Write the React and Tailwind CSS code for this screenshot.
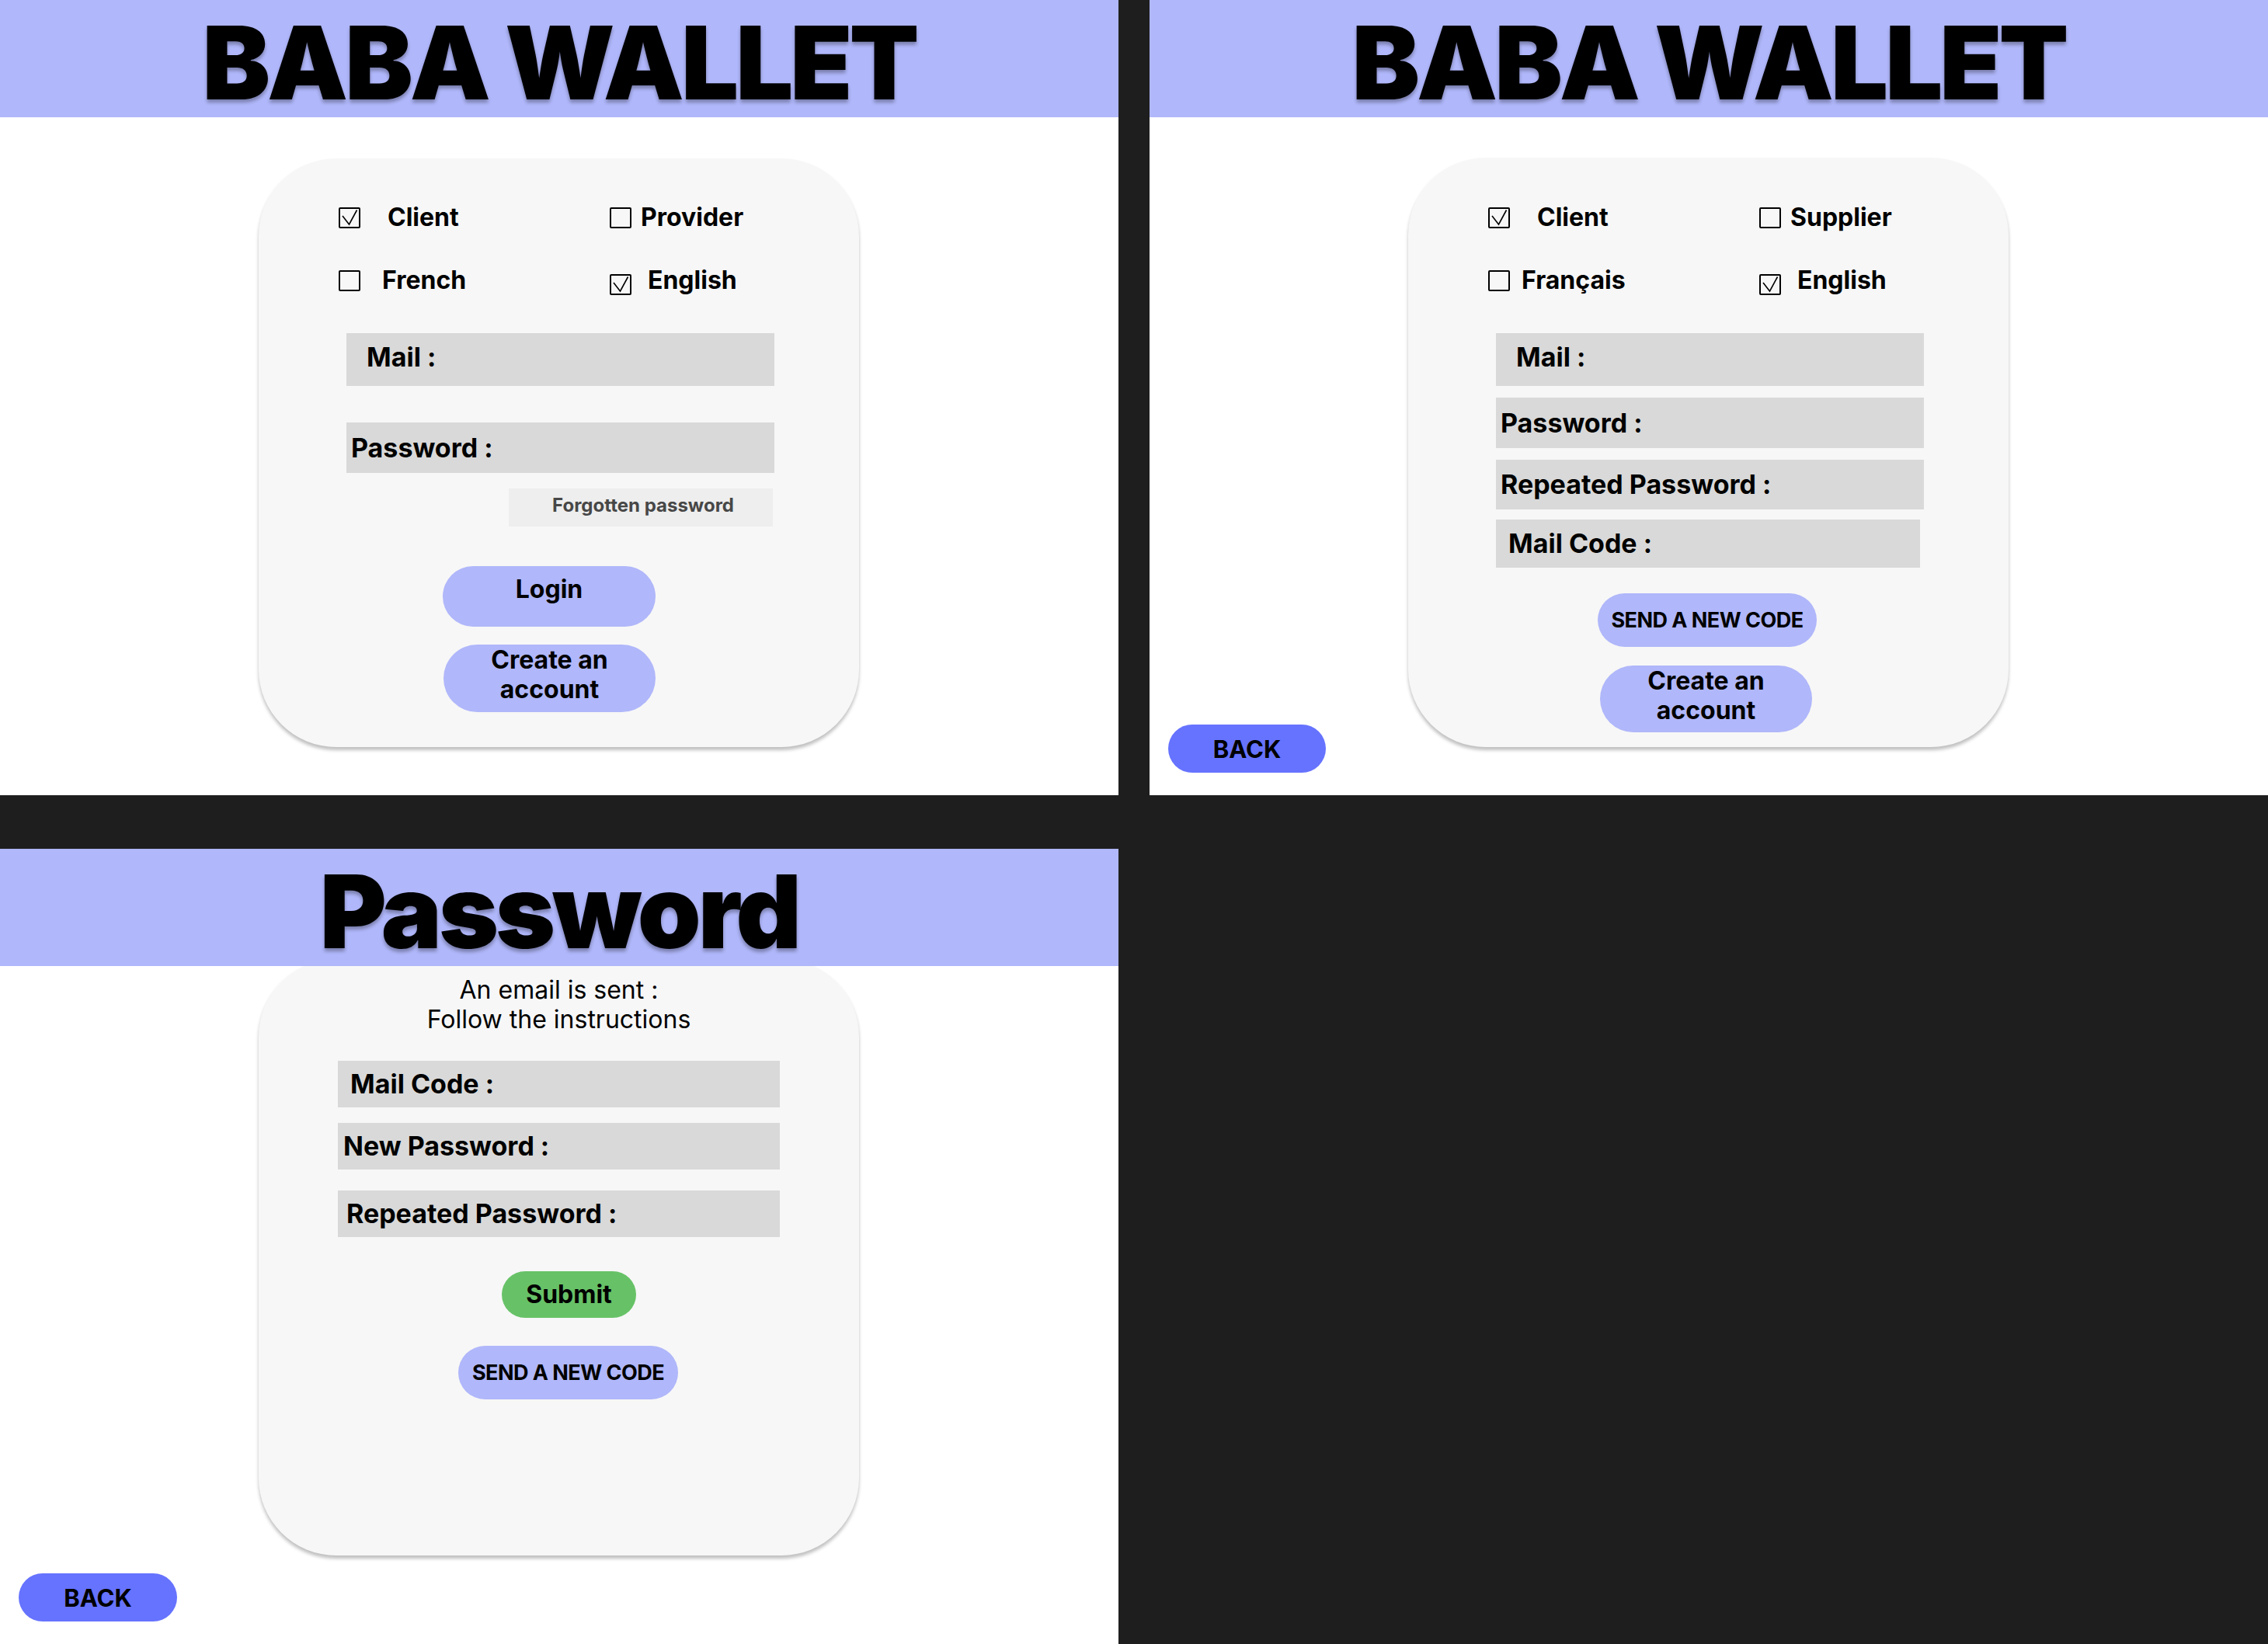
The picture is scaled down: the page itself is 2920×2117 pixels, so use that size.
function Box({ checked, className = "" }) {
  return (
    <svg width="28" height="27" viewBox="0 0 28 27" className={className}>
      <rect x="1" y="1" width="26" height="25" rx="1" fill="none" stroke="#000" strokeWidth="2" />
      {checked && (
        <polyline points="5,11 13.5,22 23.5,3.5" fill="none" stroke="#000" strokeWidth="1.6" />
      )}
    </svg>
  );
}

function Header({ children }) {
  return (
    <div className="relative z-10 h-[151px] shrink-0 bg-[#b0b7fa] flex items-center justify-center pt-[9px]">
      <h1 className="text-[131px] leading-none font-black text-black tracking-[-0.03em] [text-shadow:0_4px_4px_rgba(0,0,0,0.3)]">
        {children}
      </h1>
    </div>
  );
}

function Field({ label, className }) {
  return (
    <div className={"bg-[#d9d9d9] flex items-center text-[34px] font-bold text-black leading-none " + className}>
      {label}
    </div>
  );
}

const card = "w-[773px] bg-[#f7f7f7] rounded-[100px] shadow-[0_4px_4px_rgba(0,0,0,0.25)] flex flex-col";
const pill = "rounded-full bg-[#b0b7fa] flex flex-col items-center justify-center text-center font-bold text-black";

function Choices({ second, third }) {
  return (
    <div className="grid grid-cols-[349px_auto] gap-y-[41px] pl-[103px] text-[32px] font-bold leading-none">
      <div className="h-[40px] flex items-center gap-[35px]">
        <Box checked />
        <span>Client</span>
      </div>
      <div className="h-[40px] flex items-center gap-[12px]">
        <Box />
        <span>{second}</span>
      </div>
      <div className={"h-[40px] flex items-center " + (third === "French" ? "gap-[28px]" : "gap-[15px]")}>
        <Box />
        <span>{third}</span>
      </div>
      <div className="h-[40px] flex items-center gap-[21px]">
        <Box checked className="mt-[11px]" />
        <span>English</span>
      </div>
    </div>
  );
}

function CreateAccount({ className }) {
  return (
    <button className={pill + " text-[32px] leading-[38px] " + className}>
      <span>Create an</span>
      <span>account</span>
    </button>
  );
}

function LoginPanel() {
  return (
    <div className="bg-white flex flex-col">
      <Header>BABA WALLET</Header>
      <div className={card + " h-[758px] mt-[53px] ml-[333px] pt-[56px]"}>
        <Choices second="Provider" third="French" />
        <Field label="Mail :" className="mt-[48px] ml-[113px] w-[551px] h-[68px] pl-[26px] pb-[6px]" />
        <Field label="Password :" className="mt-[47px] ml-[113px] w-[551px] h-[65px] pl-[6px]" />
        <div className="mt-[20px] ml-[322px] w-[340px] h-[49px] bg-[#eeeeee] flex items-center justify-center pl-[6px] pb-[5px] text-[24px] font-bold text-[#474747] leading-none">
          Forgotten password
        </div>
        <button className={pill + " mt-[51px] ml-[237px] w-[274px] h-[78px] pb-[18px] text-[32px] leading-none"}>Login</button>
        <CreateAccount className="mt-[23px] ml-[238px] w-[273px] h-[87px] pb-[10px]" />
      </div>
    </div>
  );
}

function SignupPanel() {
  return (
    <div className="bg-white flex flex-col">
      <Header>BABA WALLET</Header>
      <div className="flex">
        <div className="w-[333px] shrink-0 pl-[24px] pt-[782px]">
          <button className="w-[203px] h-[62px] rounded-full bg-[#6673ff] flex items-center justify-center text-[31px] font-bold text-black leading-none">
            BACK
          </button>
        </div>
        <div className={card + " h-[759px] mt-[52px] pt-[57px]"}>
          <Choices second="Supplier" third="Français" />
          <Field label="Mail :" className="mt-[48px] ml-[113px] w-[551px] h-[68px] pl-[26px] pb-[6px]" />
          <Field label="Password :" className="mt-[15px] ml-[113px] w-[551px] h-[65px] pl-[6px]" />
          <Field label="Repeated Password :" className="mt-[15px] ml-[113px] w-[551px] h-[64px] pl-[6px]" />
          <Field label="Mail Code :" className="mt-[13px] ml-[113px] w-[546px] h-[62px] pl-[16px]" />
          <button className={pill + " mt-[33px] ml-[244px] w-[282px] h-[69px] text-[27px] leading-none tracking-[-0.02em]"}>
            SEND A NEW CODE
          </button>
          <CreateAccount className="mt-[24px] ml-[247px] w-[273px] h-[86px] pb-[8px]" />
        </div>
      </div>
    </div>
  );
}

function PasswordPanel() {
  return (
    <div className="bg-white flex flex-col">
      <Header>Password</Header>
      <div className={card + " h-[768px] -mt-[9px] ml-[333px] pt-[21px]"}>
        <p className="text-center text-[32px] leading-[38px] text-black font-normal">
          An email is sent :
          <br />
          Follow the instructions
        </p>
        <Field label="Mail Code :" className="mt-[34px] ml-[102px] w-[569px] h-[60px] pl-[16px]" />
        <Field label="New Password :" className="mt-[20px] ml-[102px] w-[569px] h-[60px] pl-[7px]" />
        <Field label="Repeated Password :" className="mt-[27px] ml-[102px] w-[569px] h-[60px] pl-[11px]" />
        <button className="mt-[44px] ml-[313px] w-[173px] h-[60px] rounded-full bg-[#67c267] flex items-center justify-center text-[32px] font-bold text-black leading-none">
          Submit
        </button>
        <button className={pill + " mt-[36px] ml-[257px] w-[283px] h-[69px] text-[27px] leading-none tracking-[-0.02em]"}>
          SEND A NEW CODE
        </button>
      </div>
      <button className="mt-[23px] ml-[24px] w-[204px] h-[62px] rounded-full bg-[#6673ff] flex items-center justify-center text-[31px] font-bold text-black leading-none">
        BACK
      </button>
    </div>
  );
}

export default function App() {
  return (
    <div className="w-[2920px] h-[2117px] bg-[#1e1e1e] grid grid-cols-[1440px_1440px] grid-rows-[1024px_1024px] gap-x-[40px] gap-y-[69px] overflow-hidden font-['Inter','Noto_Sans',sans-serif] text-black">
      <LoginPanel />
      <SignupPanel />
      <PasswordPanel />
      <div />
    </div>
  );
}
